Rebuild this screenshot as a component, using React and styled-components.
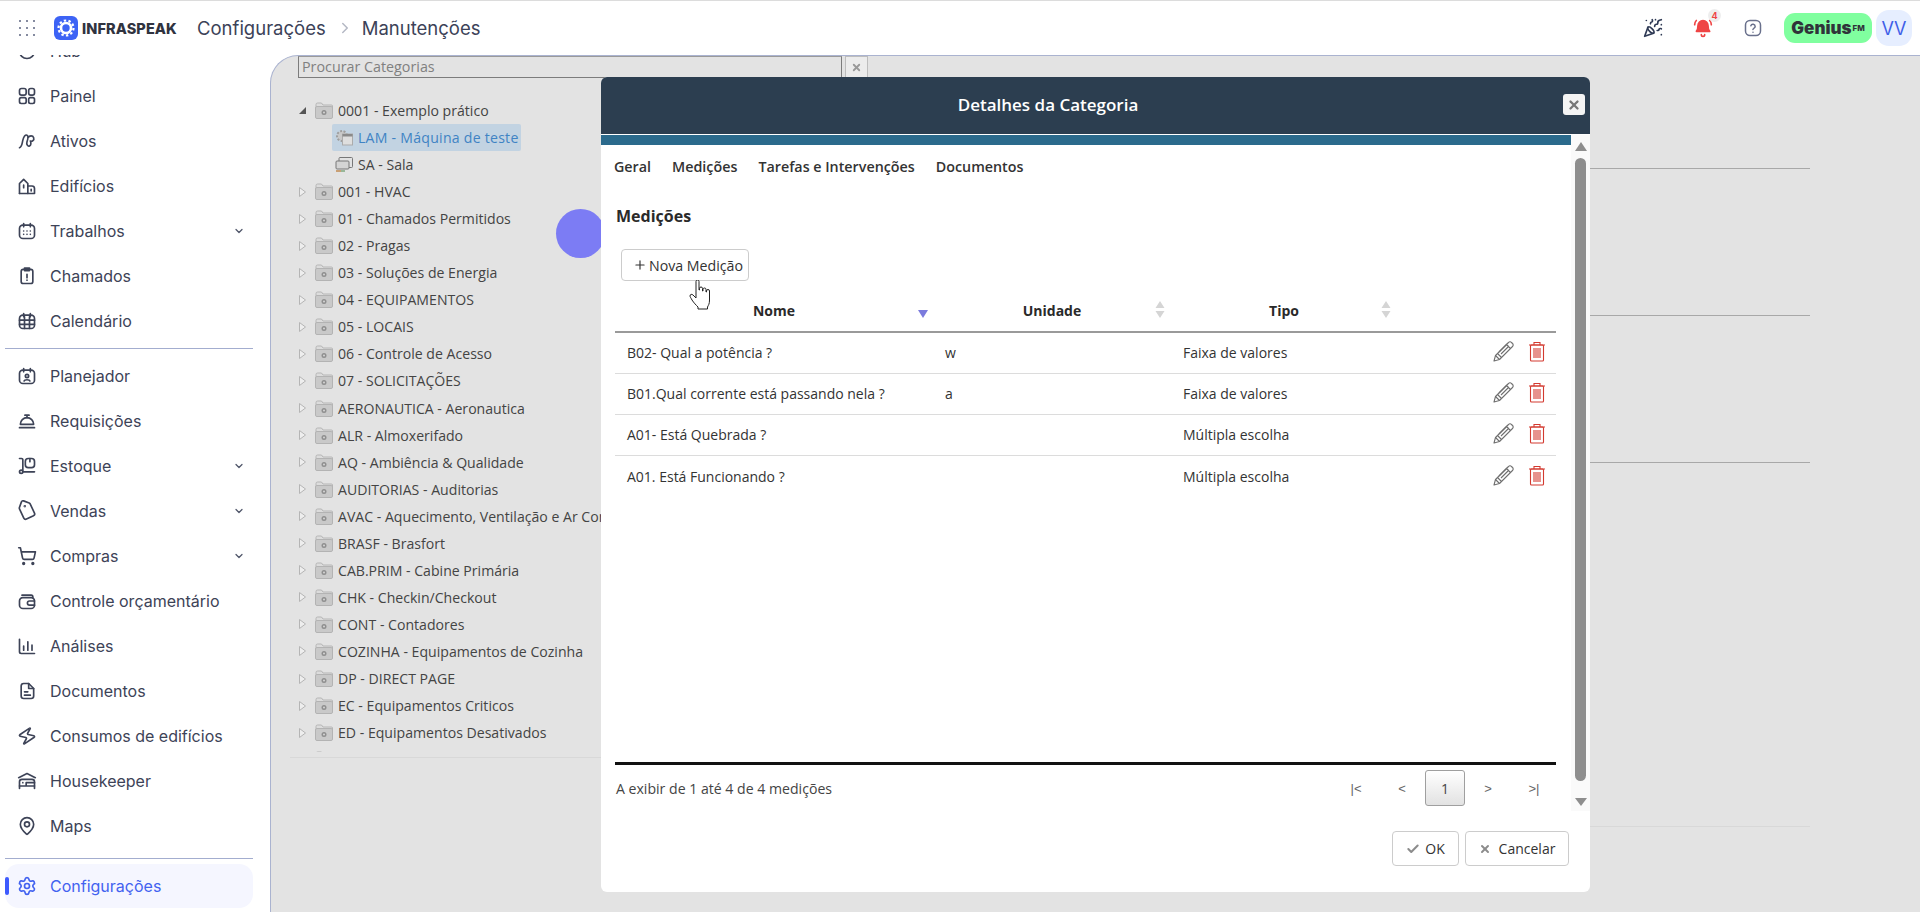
import React from 'react';
import styled, {createGlobalStyle} from 'styled-components';
import {ChevronDown, ChevronRight, PartyPopper, ShoppingCart, Tag, Zap, MapPin, Settings, Check, X, Plus} from 'lucide-react';

const GlobalStyle = createGlobalStyle`
  html, body { margin: 0; padding: 0; height: 100%; background: #fff; }
  body { font-family: "Open Sans", "Liberation Sans", sans-serif; color: #333; }
  * { box-sizing: border-box; }
`;

const Shell = styled.div`
  position: relative;
  display: grid;
  grid-template-columns: 270px 1fr;
  grid-template-rows: 55px 1fr;
  width: 100%;
  height: 100vh;
  overflow: hidden;
  background: #fff;
`;

/* top bar */
const TopBar = styled.header`
  grid-column: 1 / 3;
  display: flex;
  align-items: center;
  padding: 0 8px 0 19px;
  border-top: 1px solid #dcdcdc;
  background: #fff;
  z-index: 2;
`;
const AppsGrid = styled.div`
  display: grid;
  grid-template-columns: repeat(3, 2px);
  gap: 5px;
  width: 16px;
  margin-right: 19px;
  & i { width: 2px; height: 2px; border-radius: 50%; background: #5c6480; }
`;
const Brand = styled.div`
  display: flex;
  align-items: center;
  gap: 4px;
  width: 143px;
  font: 800 14.5px Inter, sans-serif;
  letter-spacing: 0.1px;
  color: #30333f;
`;
const Crumbs = styled.nav`
  display: flex;
  align-items: center;
  font: 400 18.5px Inter, sans-serif;
  color: #3c4258;
  & svg { margin: 0 8px 0 10px; color: #b4b8c4; }
`;
const TopActions = styled.div`
  display: flex;
  align-items: center;
  margin-left: auto;
`;
const TopIcon = styled.div`
  position: relative;
  display: flex;
  justify-content: center;
  width: 24px;
  margin-right: ${p => p.$gap}px;
`;
const BellBadge = styled.span`
  position: absolute;
  top: -9px;
  right: -6px;
  width: 13px;
  height: 13px;
  border-radius: 50%;
  background: #eee;
  color: #ef4444;
  font: 700 9px/13px Inter, sans-serif;
  text-align: center;
`;
const Genius = styled.div`
  display: flex;
  align-items: center;
  justify-content: center;
  width: 88px;
  height: 30px;
  margin-right: 4px;
  border-radius: 11px;
  background: #80ff9f;
  color: #30333a;
  font: 900 17px Inter, sans-serif;
  & sup { font-size: 8px; font-weight: 800; margin-left: 1px; }
`;
const Avatar = styled.div`
  display: flex;
  align-items: center;
  justify-content: center;
  width: 36px;
  height: 36px;
  border-radius: 13px;
  background: #e6eeff;
  color: #3f5fe8;
  font: 400 18px Inter, sans-serif;
`;

/* sidebar */
const Sidebar = styled.aside`
  display: flex;
  flex-direction: column;
  min-height: 0;
  padding: 0 17px 4px 5px;
`;
const NavScroll = styled.div`
  flex: 1;
  min-height: 0;
  overflow: hidden;
`;
const NavList = styled.div`
  margin-top: -27px;
`;
const NavRow = styled.a`
  position: relative;
  display: flex;
  align-items: center;
  gap: 13px;
  height: ${p => (p.$active ? 44 : 45)}px;
  padding: 0 8px 0 12px;
  border-radius: 14px;
  background: ${p => (p.$active ? '#f5f6ff' : 'transparent')};
  color: ${p => (p.$active ? '#4262f0' : '#3d4357')};
  font: 400 16px Inter, sans-serif;
  & > svg:first-child { flex: none; }
  & > .chev { margin-left: auto; color: #50566a; }
`;
const ActiveMark = styled.span`
  position: absolute;
  left: 0;
  top: 13px;
  width: 4px;
  height: 18px;
  border-radius: 2px;
  background: #3d5afe;
`;
const NavDivider = styled.hr`
  margin: ${p => p.$m};
  border: 0;
  border-top: 1px solid #a3adcf;
`;

/* page behind the dialog */
const Main = styled.main`
  display: flex;
  min-width: 0;
  min-height: 0;
  padding-left: 19px;
  border-top: 1px solid #aab3d0;
  border-left: 1px solid #aab3d0;
  border-top-left-radius: 28px;
  background: #e3e3e3;
`;
const TreePanel = styled.section`
  flex: none;
  width: 600px;
  height: 702px;
  padding: 0 0 6px 8px;
  border-bottom: 1px solid #d8d8d8;
`;
const SearchRow = styled.div`
  display: flex;
  gap: 3px;
  height: 22px;
`;
const SearchInput = styled.input`
  width: 544px;
  height: 22px;
  padding: 0 3px 2px;
  border: 1px solid #7c7c7c;
  border-top-color: #9a9a9a;
  background: #e3e3e3;
  font: 400 14.3px "Open Sans", sans-serif;
  outline: none;
  &::placeholder { color: #808080; opacity: 1; }
`;
const SearchClear = styled.button`
  display: flex;
  align-items: center;
  justify-content: center;
  width: 23px;
  height: 22px;
  padding: 0;
  border: 1px solid #bdbdbd;
  background: #ececec;
  color: #999;
`;
const TreeList = styled.ul`
  list-style: none;
  height: 655px;
  margin: 19px 0 0;
  padding: 0;
  overflow: hidden;
`;
const TreeRow = styled.li`
  display: flex;
  align-items: center;
  height: 27.05px;
  padding-left: ${p => (p.$child ? 34 : 0)}px;
  white-space: nowrap;
  font-size: 14.1px;
  color: #444;
`;
const Toggle = styled.span`
  display: flex;
  flex: none;
  width: 17px;
`;
const NodeLabel = styled.span`
  display: flex;
  align-items: center;
  gap: 5px;
  height: 27px;
  padding: 0 ${p => (p.$child ? 2 : 0)}px 0 ${p => (p.$child ? 3 : 0)}px;
  border-radius: 2px;
  background: ${p => (p.$selected ? '#c2d3e2' : 'transparent')};
  color: ${p => (p.$selected ? '#3f83c4' : 'inherit')};
  letter-spacing: ${p => (p.$selected ? '0.25px' : '0')};
`;
const DetailPanel = styled.section`
  flex: none;
  width: 920px;
`;
const PanelRule = styled.div`
  margin-top: ${p => p.$gap}px;
  border-top: 1px solid ${p => (p.$faint ? '#d8d8d8' : '#a8a8a8')};
`;

/* dialog */
const Dialog = styled.div`
  position: absolute;
  left: 601px;
  top: 77px;
  display: flex;
  flex-direction: column;
  width: 989px;
  height: 815px;
  border-radius: 6px;
  background: #fff;
  overflow: hidden;
`;
const DialogHead = styled.div`
  position: relative;
  display: flex;
  align-items: center;
  justify-content: center;
  flex: none;
  height: 58px;
  padding: 0 95px 2px 0;
  border-bottom: 1px solid #fff;
  background: #2c3e50;
  color: #fff;
  font-size: 17px;
  font-weight: 600;
`;
const DialogClose = styled.button`
  position: absolute;
  top: 17px;
  right: 5px;
  display: flex;
  align-items: center;
  justify-content: center;
  width: 22px;
  height: 21px;
  padding: 0;
  border: 0;
  border-radius: 3px;
  background: #f4f4f4;
  color: #777;
`;
const DialogBody = styled.div`
  display: flex;
  flex: none;
  height: 676px;
`;
const DialogContent = styled.div`
  display: flex;
  flex: 1;
  flex-direction: column;
  min-width: 0;
`;
const AccentStrip = styled.div`
  flex: none;
  height: 10px;
  background: #2b6a8c;
`;
const Tabs = styled.div`
  display: flex;
  flex: none;
  align-items: center;
  gap: 21px;
  height: 42px;
  padding-left: 13px;
  font-size: 14.3px;
  font-weight: 600;
  color: #333;
`;
const SectionTitle = styled.h3`
  height: 24px;
  margin: 17px 0 0 15px;
  font-size: 16px;
  line-height: 24px;
  font-weight: 700;
  color: #2a2a2a;
`;
const NewButton = styled.button`
  display: flex;
  align-items: center;
  justify-content: center;
  gap: 2px;
  flex: none;
  width: 128px;
  height: 32px;
  margin: 21px 0 0 20px;
  padding: 0 0 0 6px;
  border: 1px solid #ccc;
  border-radius: 4px;
  background: #fff;
  font: 400 14.2px "Open Sans", sans-serif;
  color: #333;
`;
const TableWrap = styled.div`
  flex: 1;
  min-height: 0;
  margin: 9px 15px 0 14px;
`;
const HeadRow = styled.div`
  display: grid;
  grid-template-columns: 318px 238px 226px 1fr;
  height: 43px;
  border-bottom: 2px solid #9a9a9a;
`;
const HeadCell = styled.div`
  position: relative;
  display: flex;
  align-items: center;
  justify-content: center;
  font-size: 14px;
  font-weight: 700;
  color: #2a2a2a;
`;
const SortMark = styled.span`
  position: absolute;
  right: ${p => p.$right}px;
  top: ${p => p.$top}px;
  display: flex;
`;
const BodyRow = styled.div`
  display: grid;
  grid-template-columns: 318px 238px 226px 1fr;
  align-items: center;
  height: 41px;
  padding-bottom: 1px;
  border-bottom: ${p => (p.$last ? 'none' : '1px solid #dcdcdc')};
  font-size: 14px;
  color: #333;
`;
const Cell = styled.div`
  padding-left: ${p => p.$pad}px;
`;
const RowActions = styled.div`
  display: flex;
  justify-content: flex-end;
  align-items: center;
  gap: 14px;
  padding: 0 10px 2px 0;
`;
const TableFoot = styled.div`
  display: flex;
  flex: none;
  align-items: center;
  justify-content: space-between;
  height: 49px;
  margin: 0 15px 0 14px;
  padding-left: 1px;
  border-top: 3px solid #111;
  font-size: 14.1px;
  color: #444;
`;
const Pager = styled.div`
  display: flex;
  align-items: center;
  margin-right: -1px;
`;
const PageLink = styled.span`
  display: flex;
  align-items: center;
  justify-content: center;
  width: ${p => p.$w}px;
  height: 35px;
  font: 400 13px "Liberation Sans", sans-serif;
  color: #666;
`;
const PageCurrent = styled.span`
  display: flex;
  align-items: center;
  justify-content: center;
  width: 40px;
  height: 36px;
  border: 1px solid #9f9f9f;
  border-radius: 3px;
  background: linear-gradient(#fff, #e2e2e2);
  font-size: 14px;
  color: #444;
`;
const ScrollTrack = styled.div`
  display: flex;
  flex: none;
  flex-direction: column;
  align-items: center;
  width: 19px;
  background: #fafafa;
  padding-top: 7px;
`;
const ScrollThumb = styled.div`
  width: 11px;
  height: 623px;
  margin: 7px 0 17px;
  border-radius: 6px;
  background: #8e8e8e;
`;
const Arrow = styled.span`
  width: 0;
  height: 0;
  border-left: 6px solid transparent;
  border-right: 6px solid transparent;
  ${p => (p.$down ? 'border-top: 8px solid #8e8e8e;' : 'border-bottom: 9px solid #8e8e8e;')}
`;
const DialogFoot = styled.div`
  display: flex;
  flex: 1;
  justify-content: flex-end;
  gap: 6px;
  padding: 20px 21px 0 0;
`;
const FootButton = styled.button`
  display: flex;
  align-items: center;
  justify-content: center;
  gap: ${p => p.$gap}px;
  width: ${p => p.$w}px;
  height: 35px;
  padding: 0;
  border: 1px solid #ccc;
  border-radius: 4px;
  background: #fff;
  font: 400 14px "Open Sans", sans-serif;
  color: #333;
  & svg { color: #8c8c8c; }
`;
const ClickDot = styled.div`
  position: absolute;
  left: 556px;
  top: 209px;
  width: 49px;
  height: 49px;
  border-radius: 50%;
  background: #7c7cf4;
`;
const HandCursor = styled.svg`
  position: absolute;
  left: 689px;
  top: 280px;
`;

const base = {width: 20, height: 20, viewBox: '0 0 24 24', fill: 'none', stroke: 'currentColor', strokeWidth: 2, strokeLinecap: 'round', strokeLinejoin: 'round'};

const navIcons = {
    hub: <svg {...base}><circle cx="12" cy="12" r="9"/></svg>,
    painel: <svg {...base}><rect x="3" y="3" width="8" height="8" rx="2.5"/><rect x="14" y="3" width="7" height="8" rx="2.5"/><rect x="3" y="14" width="8" height="7" rx="2"/><rect x="14" y="14" width="7" height="7" rx="2"/></svg>,
    ativos: <svg {...base}><path d="M3 20c3-1 3-5 4-9s3-7 5-6 1 5 0 8 1 6 3 5 2-4 1-6c2 1 5-1 4-4s-5-3-7 0"/></svg>,
    edificios: <svg {...base}><path d="M3 21V9l5-5 5 5v12"/><path d="M13 12h5a3 3 0 0 1 3 3v6H3"/><path d="M8 11v3M17 16v2"/></svg>,
    trabalhos: <svg {...base}><rect x="3" y="5" width="18" height="16" rx="4"/><path d="M8 3v4M16 3v4M8 12h.01M12 12h.01M16 12h.01M8 16h.01M12 16h.01M16 16h.01"/></svg>,
    chamados: <svg {...base}><rect x="5" y="4" width="14" height="17" rx="2.5"/><path d="M9 2.5h6v3H9zM12 10v4M12 17h.01"/></svg>,
    calendario: <svg {...base}><rect x="3" y="5" width="18" height="16" rx="4"/><path d="M8 3v4M16 3v4M3 11h18M3 16h18M9 7v14M15 7v14"/></svg>,
    planejador: <svg {...base}><rect x="3" y="5" width="18" height="16" rx="4"/><path d="M8 3v4M16 3v4"/><circle cx="12" cy="12" r="2"/><path d="M8.5 18c.5-2 6.500-2 7 0"/></svg>,
    requisicoes: <svg {...base}><path d="M4 16a8 8 0 0 1 16 0z"/><path d="M12 8V5M9.500 5h5M3 20h18"/></svg>,
    estoque: <svg {...base}><path d="M3 3h2.500a1.500 1.500 0 0 1 1.500 1.500V17"/><circle cx="5" cy="19" r="2"/><path d="M7 19h14"/><rect x="10" y="3" width="11" height="11" rx="3.500"/><path d="M15.500 3v4"/></svg>,
    vendas: <Tag size={20} strokeWidth={2} style={{transform: 'rotate(20deg)'}}/>,
    compras: <ShoppingCart size={20} strokeWidth={2}/>,
    controle: <svg {...base}><path d="M6 5h11a2 2 0 0 1 2 2v1"/><rect x="3" y="8" width="18" height="13" rx="4"/><path d="M21 12h-6a2.500 2.500 0 0 0 0 5h6"/></svg>,
    analises: <svg {...base}><path d="M3 4v15a2 2 0 0 0 2 2h16M8 12v5M13 7v10M18 11v6"/></svg>,
    documentos: <svg {...base}><path d="M5 6a3 3 0 0 1 3-3h6l6 6v9a3 3 0 0 1-3 3H8a3 3 0 0 1-3-3z"/><path d="M14 3v6h6M9 13h4M9 17h7"/></svg>,
    consumos: <Zap size={20} strokeWidth={2} style={{transform: 'rotate(12deg)'}}/>,
    housekeeper: <svg {...base}><path d="M2 8l10-5 10 5"/><path d="M3 21v-8a3 3 0 0 1 3-3h12a3 3 0 0 1 3 3v8"/><path d="M3 18h18M11 18v-4h10M7 14h.01"/></svg>,
    maps: <MapPin size={20} strokeWidth={2}/>,
    config: <Settings size={20} strokeWidth={2}/>,
};

const navTop = [
    ['hub', 'Hub'], ['painel', 'Painel'], ['ativos', 'Ativos'], ['edificios', 'Edifícios'],
    ['trabalhos', 'Trabalhos', true], ['chamados', 'Chamados'], ['calendario', 'Calendário'],
];
const navBottom = [
    ['planejador', 'Planejador'], ['requisicoes', 'Requisições'], ['estoque', 'Estoque', true],
    ['vendas', 'Vendas', true], ['compras', 'Compras', true], ['controle', 'Controle orçamentário'],
    ['analises', 'Análises'], ['documentos', 'Documentos'], ['consumos', 'Consumos de edifícios'],
    ['housekeeper', 'Housekeeper'], ['maps', 'Maps'],
];

const categories = [
    '001 - HVAC', '01 - Chamados Permitidos', '02 - Pragas', '03 - Soluções de Energia', '04 - EQUIPAMENTOS',
    '05 - LOCAIS', '06 - Controle de Acesso', '07 - SOLICITAÇÕES', 'AERONAUTICA - Aeronautica', 'ALR - Almoxerifado',
    'AQ - Ambiência & Qualidade', 'AUDITORIAS - Auditorias', 'AVAC - Aquecimento, Ventilação e Ar Condicionado',
    'BRASF - Brasfort', 'CAB.PRIM - Cabine Primária', 'CHK - Checkin/Checkout', 'CONT - Contadores',
    'COZINHA - Equipamentos de Cozinha', 'DP - DIRECT PAGE', 'EC - Equipamentos Criticos',
    'ED - Equipamentos Desativados', '',
];

const measures = [
    ['B02- Qual a potência ?', 'w', 'Faixa de valores'],
    ['B01.Qual corrente está passando nela ?', 'a', 'Faixa de valores'],
    ['A01- Está Quebrada ?', '', 'Múltipla escolha'],
    ['A01. Está Funcionando ?', '', 'Múltipla escolha'],
];

const Logo = () => (
    <svg width="24" height="24" viewBox="0 0 24 24">
        <rect width="24" height="24" rx="6" fill="#3d63f5"/>
        <circle cx="12" cy="12" r="5" fill="none" stroke="#fff" strokeWidth="2.600"/>
        <circle cx="12" cy="12" r="7.500" fill="none" stroke="#fff" strokeWidth="2.200" strokeDasharray="2.400 2.300"/>
    </svg>
);

const Bell = () => (
    <svg width="20" height="20" viewBox="0 0 24 24" fill="#ef4444" stroke="#ef4444" strokeWidth="2" strokeLinecap="round" strokeLinejoin="round">
        <path d="M6 9a6 6 0 0 1 12 0c0 5 2 7 2 7H4s2-2 2-7"/>
        <path d="M10 20a2 2 0 0 0 4 0" fill="none"/>
        <path d="M2 8c0-2 1-4 2-5M22 8c0-2-1-4-2-5" fill="none"/>
    </svg>
);

const HelpSquare = () => (
    <svg width="18" height="18" viewBox="0 0 24 24" fill="none" stroke="#69708c" strokeWidth="2" strokeLinecap="round" strokeLinejoin="round">
        <rect x="2" y="2" width="20" height="20" rx="6"/>
        <path d="M9.100 9a3 3 0 0 1 5.800 1c0 2-3 2.500-3 4M12 17.500h.01"/>
    </svg>
);

const FolderIcon = () => (
    <svg width="18" height="17" viewBox="0 0 18 17">
        <path d="M1 15V2.500A1.500 1.500 0 0 1 2.500 1h4L8 3h8.500A1 1 0 0 1 17.500 4v11z" fill="#dcdcdc" stroke="#b5b5b5"/>
        <rect x="0.500" y="4.500" width="17" height="12" rx="1.500" fill="#c9c9c9" stroke="#b3b3b3"/>
        <circle cx="9" cy="10.500" r="2.500" fill="#8f8f8f"/>
        <circle cx="9" cy="10.500" r="1" fill="#d5d5d5"/>
    </svg>
);

const MachineIcon = () => (
    <svg width="18" height="17" viewBox="0 0 18 17">
        <circle cx="7" cy="7" r="5" fill="#c9c9c9" stroke="#9e9e9e" strokeWidth="2" strokeDasharray="2 1.500"/>
        <rect x="7.500" y="5" width="10" height="11" fill="#dedede" stroke="#ababab"/>
        <rect x="7.500" y="5" width="10" height="2.500" fill="#8a8a8a"/>
    </svg>
);

const RoomIcon = () => (
    <svg width="18" height="17" viewBox="0 0 18 17">
        <rect x="4" y="1.500" width="13.500" height="10" rx="1" fill="#e2e2e2" stroke="#777"/>
        <rect x="1" y="5" width="13" height="8" rx="1" fill="#d4d4d4" stroke="#777"/>
        <path d="M1 15h5" stroke="#c08a50" strokeWidth="1.500"/>
        <path d="M6 15h4" stroke="#7fa87f" strokeWidth="1.500"/>
    </svg>
);

const TreeToggle = ({open}) => (
    <svg width="9" height="12" viewBox="0 0 9 12">
        {open
            ? <path d="M1 9h7V2z" fill="#555"/>
            : <path d="M1.500 1.500l6 4.500-6 4.500z" fill="#eee" stroke="#b5b5b5"/>}
    </svg>
);

const SortIdle = () => (
    <svg width="10" height="17" viewBox="0 0 10 17" fill="#d5d5d5">
        <path d="M5 0l4.500 7h-9zM5 17L.5 10h9z"/>
    </svg>
);

const SortDown = () => (
    <svg width="10" height="8" viewBox="0 0 10 8" fill="#7b7bdd">
        <path d="M0 0h10L5 8z"/>
    </svg>
);

const Pencil = () => (
    <svg width="21" height="21" viewBox="0 0 21 21" fill="none" stroke="#6f6f6f" strokeWidth="1.100" strokeLinejoin="round">
        <path d="M1 20l1.500-5.500L15.500 1.500a2 2 0 0 1 3 0l1 1a2 2 0 0 1 0 3L6.500 18.500z"/>
        <path d="M2.500 14.500l4 4M4.500 12.500l4 4M13.500 3.500l4 4M6 11l8-8M8 13l8-8"/>
    </svg>
);

const Trash = () => (
    <svg width="18" height="21" viewBox="0 0 18 21" fill="none" stroke="#d33a30" strokeWidth="1.100">
        <path d="M1 4h16M6 4V1.500h6V4"/>
        <rect x="2.500" y="4" width="13" height="16" rx="1"/>
        <path d="M6 7v10M8 7v10M10 7v10M12 7v10"/>
    </svg>
);

const NavItem = ({item}) => (
    <NavRow>
        {navIcons[item[0]]}
        {item[1]}
        {item[2] && <ChevronDown className="chev" size={12} strokeWidth={2.500}/>}
    </NavRow>
);

const App = () => {
    return (
        <Shell>
            <GlobalStyle/>
            <TopBar>
                <AppsGrid>{Array.from({length: 9}, (_, i) => <i key={i}/>)}</AppsGrid>
                <Brand><Logo/>INFRASPEAK</Brand>
                <Crumbs>Configurações<ChevronRight size={18}/>Manutenções</Crumbs>
                <TopActions>
                    <TopIcon $gap={26}><PartyPopper size={20} color="#2f3a55"/></TopIcon>
                    <TopIcon $gap={26}><Bell/><BellBadge>4</BellBadge></TopIcon>
                    <TopIcon $gap={19}><HelpSquare/></TopIcon>
                    <Genius>Genius<sup>FM</sup></Genius>
                    <Avatar>VV</Avatar>
                </TopActions>
            </TopBar>

            <Sidebar>
                <NavScroll>
                    <NavList>
                        {navTop.map(item => <NavItem key={item[1]} item={item}/>)}
                        <NavDivider $m="5px 0 4px"/>
                        {navBottom.map(item => <NavItem key={item[1]} item={item}/>)}
                    </NavList>
                </NavScroll>
                <NavDivider $m="0 0 5px"/>
                <NavRow $active>
                    <ActiveMark/>
                    {navIcons.config}
                    Configurações
                </NavRow>
            </Sidebar>

            <Main>
                <TreePanel>
                    <SearchRow>
                        <SearchInput placeholder="Procurar Categorias" readOnly/>
                        <SearchClear><X size={11} strokeWidth={4}/></SearchClear>
                    </SearchRow>
                    <TreeList>
                        <TreeRow>
                            <Toggle><TreeToggle open/></Toggle>
                            <NodeLabel><FolderIcon/>0001 - Exemplo prático</NodeLabel>
                        </TreeRow>
                        <TreeRow $child>
                            <NodeLabel $child $selected><MachineIcon/>LAM - Máquina de teste</NodeLabel>
                        </TreeRow>
                        <TreeRow $child>
                            <NodeLabel $child><RoomIcon/>SA - Sala</NodeLabel>
                        </TreeRow>
                        {categories.map(name => (
                            <TreeRow key={name}>
                                <Toggle><TreeToggle/></Toggle>
                                <NodeLabel><FolderIcon/>{name}</NodeLabel>
                            </TreeRow>
                        ))}
                    </TreeList>
                </TreePanel>
                <DetailPanel>
                    <PanelRule $gap={112}/>
                    <PanelRule $gap={146}/>
                    <PanelRule $gap={146}/>
                    <PanelRule $gap={363} $faint/>
                </DetailPanel>
            </Main>

            <ClickDot/>

            <Dialog>
                <DialogHead>
                    Detalhes da Categoria
                    <DialogClose><X size={14} strokeWidth={4}/></DialogClose>
                </DialogHead>
                <DialogBody>
                    <DialogContent>
                        <AccentStrip/>
                        <Tabs>
                            <span>Geral</span>
                            <span>Medições</span>
                            <span>Tarefas e Intervenções</span>
                            <span>Documentos</span>
                        </Tabs>
                        <SectionTitle>Medições</SectionTitle>
                        <NewButton><Plus size={14}/>Nova Medição</NewButton>
                        <TableWrap>
                            <HeadRow>
                                <HeadCell>Nome<SortMark $right={5} $top={20}><SortDown/></SortMark></HeadCell>
                                <HeadCell>Unidade<SortMark $right={6} $top={11}><SortIdle/></SortMark></HeadCell>
                                <HeadCell>Tipo<SortMark $right={6} $top={11}><SortIdle/></SortMark></HeadCell>
                                <HeadCell/>
                            </HeadRow>
                            {measures.map((row, i) => (
                                <BodyRow key={row[0]} $last={i === measures.length - 1}>
                                    <Cell $pad={12}>{row[0]}</Cell>
                                    <Cell $pad={12}>{row[1]}</Cell>
                                    <Cell $pad={12}>{row[2]}</Cell>
                                    <RowActions><Pencil/><Trash/></RowActions>
                                </BodyRow>
                            ))}
                        </TableWrap>
                        <TableFoot>
                            <span>A exibir de 1 até 4 de 4 medições</span>
                            <Pager>
                                <PageLink $w={46}>|&lt;</PageLink>
                                <PageLink $w={46}>&lt;</PageLink>
                                <PageCurrent>1</PageCurrent>
                                <PageLink $w={46}>&gt;</PageLink>
                                <PageLink $w={46}>&gt;|</PageLink>
                            </Pager>
                        </TableFoot>
                    </DialogContent>
                    <ScrollTrack>
                        <Arrow/>
                        <ScrollThumb/>
                        <Arrow $down/>
                    </ScrollTrack>
                </DialogBody>
                <DialogFoot>
                    <FootButton $w={67} $gap={5}><Check size={14} strokeWidth={3.500}/>OK</FootButton>
                    <FootButton $w={104} $gap={8}><X size={12} strokeWidth={4}/>Cancelar</FootButton>
                </DialogFoot>
            </Dialog>

            <HandCursor width="23" height="30" viewBox="0 0 23 30">
                <path d="M7 1.500a1.500 1.500 0 0 1 3 0V10h.5V8.500a1.500 1.500 0 0 1 3 0V11h.5V9.500a1.500 1.500 0 0 1 3 0V12h.5v-1a1.500 1.500 0 0 1 3 0v9c0 4-1 5-2 7v2H9v-2c-2-2-4-4-6-7-1-2-2-3-2-4 0-2 2-2 3-1l3 3z" fill="#fff" stroke="#222" strokeWidth="1"/>
            </HandCursor>
        </Shell>
    );
};

export default App;
